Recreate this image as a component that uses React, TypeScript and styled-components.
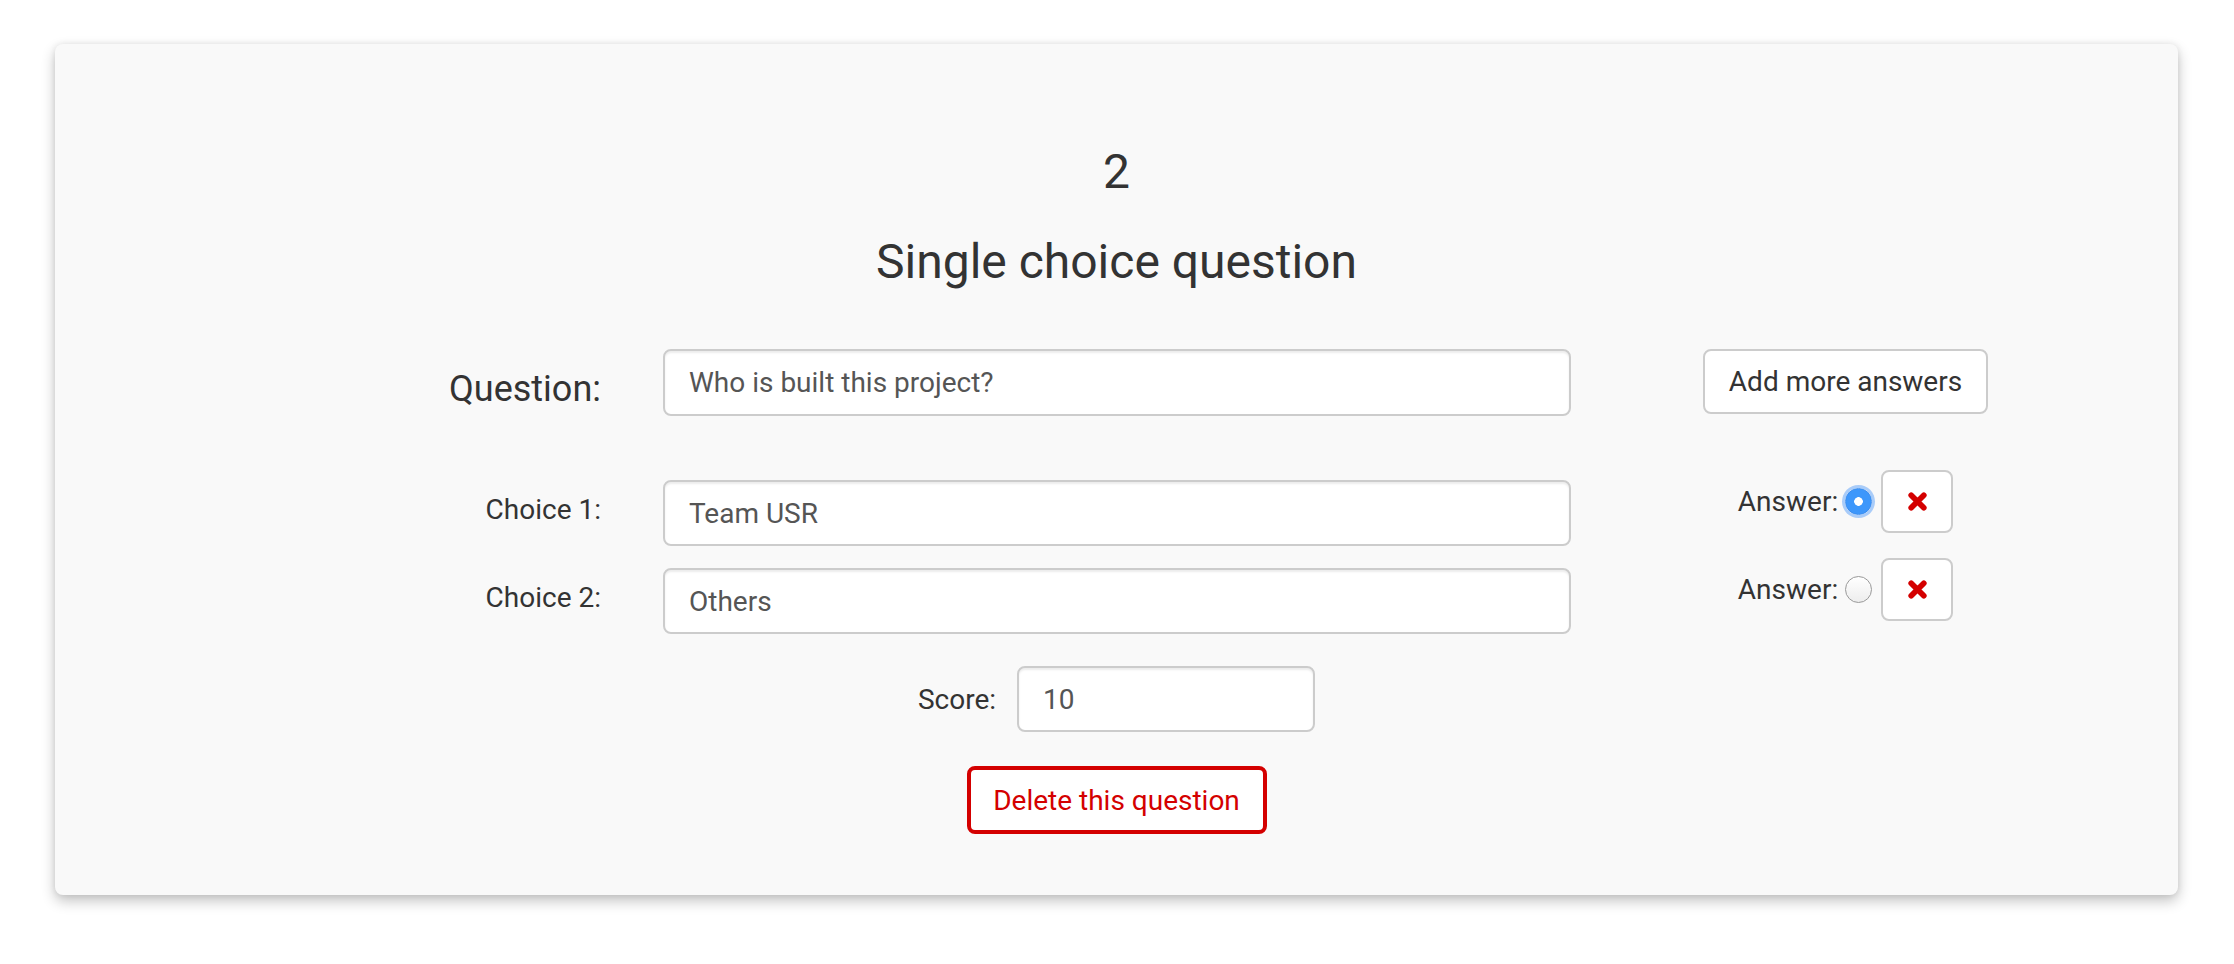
import { FC } from 'react';
import styled, { createGlobalStyle } from 'styled-components';

const GlobalStyle = createGlobalStyle`
  body {
    margin: 0;
    background: #fff;
    color: #333;
    font-family: Roboto, "Liberation Sans", sans-serif;
  }
`;

const Page = styled.main`
  min-height: 964px;
  padding: 44px 56px 0 55px;
  box-sizing: border-box;
`;

const Card = styled.section`
  background: #f9f9f9;
  border-radius: 8px;
  box-shadow: 0 6px 14px rgba(0, 0, 0, 0.24), 0 0 6px rgba(0, 0, 0, 0.08);
  padding: 100px 89px 61px;
`;

const Number = styled.div`
  font-size: 48px;
  line-height: 55px;
  text-align: center;
`;

const Title = styled.h3`
  font-size: 48px;
  font-weight: 400;
  line-height: 55px;
  margin: 35px 0 0;
  text-align: center;
`;

const Form = styled.div`
  display: flex;
  flex-direction: column;
  margin-top: 60px;
`;

const Row = styled.div<{ $space: number }>`
  align-items: start;
  column-gap: 31px;
  display: grid;
  grid-template-columns: 488px 908px 1fr;
  margin-top: ${({ $space }) => $space}px;
`;

const Label = styled.label<{ $large?: boolean }>`
  font-size: ${({ $large }) => ($large ? 36 : 28)}px;
  line-height: ${({ $large }) => ($large ? 43 : 40)}px;
  padding: ${({ $large }) => ($large ? 19 : 20)}px 31px 0 0;
  text-align: right;
`;

const TextInput = styled.input<{ $offset?: number; $height?: number }>`
  background: #fff;
  border: 2px solid #ccc;
  border-radius: 8px;
  box-shadow: inset 0 2px 2px rgba(0, 0, 0, 0.075);
  box-sizing: border-box;
  color: #555;
  font-family: inherit;
  font-size: 28px;
  height: ${({ $height = 66 }) => $height}px;
  margin: ${({ $offset = 0 }) => $offset}px 0 0;
  outline: none;
  padding: 0 24px;
  width: 100%;
`;

const Actions = styled.div`
  justify-self: center;
`;

const PlainButton = styled.button`
  background: #fff;
  border: 2px solid #ccc;
  border-radius: 8px;
  box-sizing: border-box;
  color: #333;
  font-family: inherit;
  font-size: 28px;
  height: 65px;
  padding: 0 24px;
`;

const AnswerGroup = styled.div`
  align-items: center;
  display: flex;
  font-size: 28px;
`;

const Radio = styled.input.attrs({ type: 'radio' })`
  appearance: none;
  background: linear-gradient(#fff, #ededed);
  border: 1px solid #999;
  border-radius: 50%;
  box-sizing: border-box;
  height: 27px;
  margin: 0 9px 0 7px;
  width: 27px;

  &:checked {
    background: radial-gradient(circle, #fff 0 4px, #3d97fb 4.6px);
    border-color: #3a8df0;
    box-shadow: 0 0 0 3px rgba(90, 160, 250, 0.5);
  }
`;

const RemoveButton = styled.button`
  align-items: center;
  background: #fff;
  border: 2px solid #ccc;
  border-radius: 8px;
  box-sizing: border-box;
  display: flex;
  height: 63px;
  justify-content: center;
  padding: 0;
  width: 72px;
`;

const ScoreRow = styled.div`
  align-items: center;
  display: flex;
  font-size: 28px;
  gap: 21px;
  justify-content: center;
  margin-top: 32px;
`;

const ScoreInput = styled(TextInput)`
  width: 298px;
`;

const Footer = styled.div`
  display: flex;
  justify-content: center;
  margin-top: 34px;
`;

const DeleteButton = styled.button`
  background: #fff;
  border: 4px solid #d40000;
  border-radius: 8px;
  box-sizing: border-box;
  color: #d40000;
  font-family: inherit;
  font-size: 28px;
  height: 68px;
  width: 300px;
`;

const Cross: FC = () => (
  <svg width="21" height="21" viewBox="0 0 20 20">
    <path d="M4 4L16 16M16 4L4 16" stroke="#d40000" strokeWidth="5.4" strokeLinecap="round" fill="none" />
  </svg>
);

const choices = [
  { label: 'Choice 1:', value: 'Team USR', checked: true },
  { label: 'Choice 2:', value: 'Others', checked: false },
];

const App: FC = () => (
  <Page>
    <GlobalStyle />
    <Card>
      <Number>2</Number>
      <Title>Single choice question</Title>

      <Form>
        <Row $space={0}>
          <Label $large>Question:</Label>
          <TextInput $height={67} defaultValue="Who is built this project?" />
          <Actions>
            <PlainButton>Add more answers</PlainButton>
          </Actions>
        </Row>

        {choices.map((choice, i) => (
          <Row key={choice.label} $space={i === 0 ? 54 : 12}>
            <Label>{choice.label}</Label>
            <TextInput $offset={10} defaultValue={choice.value} />
            <Actions>
              <AnswerGroup>
                <span>Answer:</span>
                <Radio name="answer" defaultChecked={choice.checked} />
                <RemoveButton>
                  <Cross />
                </RemoveButton>
              </AnswerGroup>
            </Actions>
          </Row>
        ))}

        <ScoreRow>
          <span>Score:</span>
          <ScoreInput defaultValue="10" />
        </ScoreRow>

        <Footer>
          <DeleteButton>Delete this question</DeleteButton>
        </Footer>
      </Form>
    </Card>
  </Page>
);

export default App;
